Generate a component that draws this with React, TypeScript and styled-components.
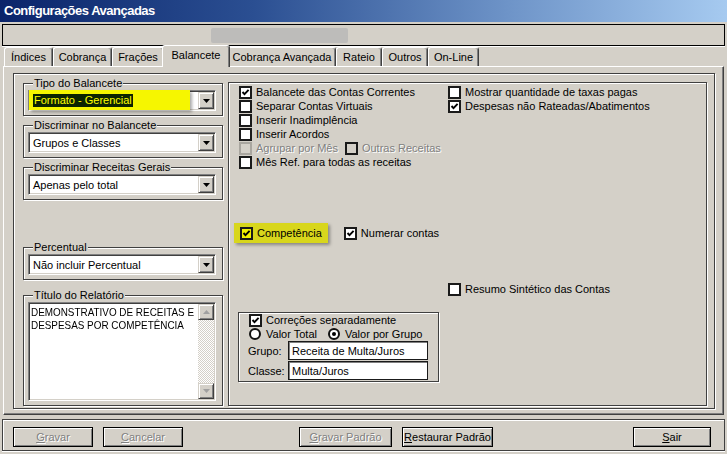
import React from "react";
import styled, { createGlobalStyle } from "styled-components";

const GlobalStyle = createGlobalStyle`
  html, body { margin: 0; padding: 0; background: #d4d0c8; }
  body { font-family: "Liberation Sans", Arial, sans-serif; font-size: 11px; color: #000; }
  *, *::before, *::after { box-sizing: border-box; }
`;

const Window = styled.div`
  width: 727px;
  height: 454px;
  display: flex;
  flex-direction: column;
  background: #d4d0c8;
  overflow: hidden;
`;

const TitleBar = styled.div`
  flex: none;
  height: 22px;
  display: flex;
  align-items: center;
  padding: 0 0 1px 4px;
  background: linear-gradient(90deg, #0a246a 0%, #2b4f92 35%, #6e94c8 70%, #a6caf0 100%);
  color: #fff;
  font-weight: bold;
  font-size: 13px;
  letter-spacing: -0.5px;
  white-space: nowrap;
`;

const Content = styled.div`
  flex: 1;
  display: flex;
  flex-direction: column;
  padding: 2px 2px 0 2px;
`;

const TopPanel = styled.div`
  flex: none;
  height: 22px;
  display: flex;
  align-items: center;
  padding-left: 208px;
  border: 1px solid #000;
  box-shadow: 0 1px 0 #fff;
`;

const ProgressSlot = styled.div`
  width: 137px;
  height: 15px;
  background: #bdbcba;
  border-radius: 2px;
`;

const TabStrip = styled.div`
  flex: none;
  height: 21px;
  margin-top: -1px;
  display: flex;
  align-items: flex-end;
  padding-left: 2px;
  position: relative;
  z-index: 1;
`;

const Tab = styled.div<{ $w: number; $active?: boolean }>`
  flex: none;
  width: ${(p) => p.$w}px;
  height: ${(p) => (p.$active ? 22 : 19)}px;
  margin: 0 ${(p) => (p.$active ? -2 : 0)}px ${(p) => (p.$active ? -1 : 0)}px;
  padding-bottom: ${(p) => (p.$active ? 3 : 0)}px;
  display: flex;
  align-items: center;
  justify-content: center;
  background: #d4d0c8;
  border-top: 1px solid #fff;
  border-left: 1px solid #fff;
  border-right: 1px solid #404040;
  box-shadow: inset -1px 0 0 #808080;
  border-radius: 3px 3px 0 0;
  position: relative;
  z-index: ${(p) => (p.$active ? 2 : 1)};
  white-space: nowrap;
`;

const TabPage = styled.div`
  flex: none;
  height: 349px;
  margin: 0 1px;
  display: flex;
  border: 1px solid;
  border-color: #fff #404040 #404040 #fff;
  box-shadow: inset -1px -1px 0 #808080;
  padding: 6px 8px 5px 9px;
`;

const Frame = styled.div`
  flex: 1;
  display: flex;
  gap: 5px;
  padding: 3px 7px 1px 9px;
  border: 1px solid #404040;
  box-shadow: inset 1px 1px 0 #fff, 1px 1px 0 #fff;
`;

const LeftCol = styled.div`
  flex: none;
  width: 200px;
  display: flex;
  flex-direction: column;
`;

const Group = styled.fieldset<{ $mt?: number }>`
  margin: ${(p) => p.$mt ?? 0}px 0 0;
  padding: 0 6px 4px 4px;
  min-width: 0;
  border: 1px solid #404040;
  box-shadow: inset 1px 1px 0 #fff, 1px 1px 0 #fff;
`;

const Legend = styled.legend`
  margin-left: 5px;
  padding: 0 1px;
  line-height: 13px;
  font-size: 11px;
  background: #d4d0c8;
`;

const SelectBox = styled.div`
  height: 21px;
  display: flex;
  background: #fff;
  border: 1px solid;
  border-color: #808080 #fff #fff #808080;
  padding: 1px;
  box-shadow: inset 1px 1px 0 #404040, inset -1px -1px 0 #d4d0c8;
`;

const SelectValue = styled.div<{ $hl?: boolean }>`
  flex: ${(p) => (p.$hl ? "none" : "1")};
  width: ${(p) => (p.$hl ? "161px" : "auto")};
  margin: ${(p) => (p.$hl ? "-2px 0 -1px -1px" : "0")};
  padding-left: ${(p) => (p.$hl ? 4 : 3)}px;
  display: flex;
  align-items: center;
  white-space: nowrap;
  background: ${(p) => (p.$hl ? "#f6f600" : "transparent")};
  box-shadow: ${(p) => (p.$hl ? "2px 2px 3px rgba(0,0,0,0.35)" : "none")};
  position: relative;
  z-index: 1;
`;

const Selection = styled.span`
  background: #0c2400;
  color: #ffff00;
  line-height: 13px;
  padding: 0 1px;
`;

const Spacer = styled.div`
  flex: 1;
`;

const DropButton = styled.div`
  flex: none;
  width: 16px;
  display: flex;
  align-items: center;
  justify-content: center;
  background: #d4d0c8;
  border: 1px solid;
  border-color: #d4d0c8 #404040 #404040 #d4d0c8;
  box-shadow: inset 1px 1px 0 #fff, inset -1px -1px 0 #808080;
`;

const Memo = styled.div`
  height: 99px;
  display: flex;
  background: #fff;
  border: 1px solid;
  border-color: #808080 #fff #fff #808080;
  padding: 1px;
  box-shadow: inset 1px 1px 0 #404040, inset -1px -1px 0 #d4d0c8;
`;

const MemoText = styled.div`
  flex: 1;
  min-width: 0;
  padding: 2px 0 0 1px;
  display: flex;
  flex-direction: column;
  align-items: flex-start;
`;

const MemoLine = styled.span`
  display: block;
  line-height: 13px;
  white-space: nowrap;
  transform: scaleX(0.9);
  transform-origin: 0 50%;
`;

const ScrollBar = styled.div`
  flex: none;
  width: 16px;
  display: flex;
  flex-direction: column;
  justify-content: space-between;
  background: repeating-conic-gradient(#ffffff 0 25%, #d4d0c8 0 50%) 0 0 / 2px 2px;
  position: relative;
  z-index: 1;
`;

const ScrollBtn = styled.div`
  height: 16px;
  display: flex;
  align-items: center;
  justify-content: center;
  background: #d4d0c8;
  border: 1px solid;
  border-color: #d4d0c8 #404040 #404040 #d4d0c8;
  box-shadow: inset 1px 1px 0 #fff, inset -1px -1px 0 #808080;
`;

const RightPanel = styled.div`
  flex: 1;
  margin: 5px 0 1px;
  display: flex;
  padding: 2px 0 0 10px;
  border: 1px solid #404040;
  box-shadow: inset 1px 1px 0 #fff, 1px 1px 0 #fff;
`;

const PanelCol = styled.div<{ $w?: number }>`
  flex: ${(p) => (p.$w ? "none" : "1")};
  width: ${(p) => (p.$w ? `${p.$w}px` : "auto")};
  display: flex;
  flex-direction: column;
  align-items: flex-start;
`;

const CheckRow = styled.div<{ $mt?: number; $ml?: number; $h?: number }>`
  display: flex;
  align-items: center;
  gap: 4px;
  height: ${(p) => p.$h ?? 14}px;
  margin-top: ${(p) => p.$mt ?? 0}px;
  margin-left: ${(p) => p.$ml ?? 0}px;
  white-space: nowrap;
`;

const InlineGroup = styled.div`
  display: flex;
  align-items: center;
`;

const Box = styled.span<{ $variant: "normal" | "faded" | "dim"; $hl?: boolean }>`
  flex: none;
  width: 13px;
  height: 13px;
  display: inline-flex;
  align-items: center;
  justify-content: center;
  border: 2px solid ${(p) => (p.$variant === "faded" ? "#a9a69f" : "#1a1a1a")};
  background: ${(p) => (p.$hl ? "#f0f000" : p.$variant === "normal" ? "#fff" : "#d4d0c8")};
`;

const Label = styled.span<{ $disabled?: boolean }>`
  line-height: 13px;
  color: ${(p) => (p.$disabled ? "#808080" : "#000")};
  text-shadow: ${(p) => (p.$disabled ? "1px 1px 0 #fff" : "none")};
`;

const Highlight = styled.div`
  display: flex;
  align-items: center;
  gap: 4px;
  height: 20px;
  margin-left: -5px;
  padding: 0 6px 0 6px;
  background: #d8d61c;
  box-shadow: 2px 2px 3px rgba(0, 0, 0, 0.35);
`;

const SubGroup = styled.div`
  width: 201px;
  margin: 69px 0 0 -1px;
  padding: 1px 9px 1px 9px;
  display: flex;
  flex-direction: column;
  border: 1px solid #404040;
  box-shadow: inset 1px 1px 0 #fff, 1px 1px 0 #fff;
`;

const RadioRow = styled.div`
  display: flex;
  align-items: center;
  gap: 11px;
  height: 13px;
  margin-left: 1px;
`;

const RadioItem = styled.div`
  display: flex;
  align-items: center;
  gap: 5px;
  white-space: nowrap;
`;

const RadioCircle = styled.span<{ $on?: boolean }>`
  flex: none;
  width: 12px;
  height: 12px;
  border-radius: 50%;
  border: 2px solid #111;
  background: #fff;
  display: inline-flex;
  align-items: center;
  justify-content: center;
  &::after {
    content: "";
    width: 4px;
    height: 4px;
    border-radius: 50%;
    background: ${(p) => (p.$on ? "#000" : "transparent")};
  }
`;

const FieldRow = styled.div<{ $mt: number }>`
  display: flex;
  align-items: center;
  height: 19px;
  margin-top: ${(p) => p.$mt}px;
`;

const FieldLabel = styled.span`
  width: 40px;
  flex: none;
`;

const TextInput = styled.div`
  width: 140px;
  height: 19px;
  display: flex;
  align-items: center;
  padding-left: 3px;
  background: #fff;
  border: 1px solid #1a1a1a;
  box-shadow: inset 1px 1px 0 #808080;
  white-space: nowrap;
`;

const ButtonBar = styled.div`
  flex: none;
  height: 32px;
  margin-top: 4px;
  display: flex;
  align-items: flex-start;
  gap: 10px;
  padding: 7px 13px 0 10px;
  border: 1px solid #404040;
  box-shadow: inset 1px 1px 0 #fff, 0 1px 0 #fff;
`;

const Button = styled.button<{ $w: number; $ml?: string }>`
  flex: none;
  width: ${(p) => p.$w}px;
  height: 20px;
  margin-left: ${(p) => p.$ml ?? "0"};
  padding: 0;
  font-family: inherit;
  font-size: 11px;
  color: #000;
  white-space: nowrap;
  background: #d4d0c8;
  border: 1px solid #000;
  box-shadow: inset 1px 1px 0 #fff, inset -1px -1px 0 #808080;
  &:disabled {
    color: #808080;
    text-shadow: 1px 1px 0 #fff;
  }
`;

const CheckMark = () => (
  <svg width="9" height="9" viewBox="0 0 9 9">
    <path d="M1.5 4 L3.5 6.2 L7.6 1.8" fill="none" stroke="#000" strokeWidth="1.9" />
  </svg>
);

const Arrow = ({ up, color = "#000" }: { up?: boolean; color?: string }) => (
  <svg width="7" height="4" viewBox="0 0 7 4">
    <polygon points={up ? "0,4 7,4 3.5,0" : "0,0 7,0 3.5,4"} fill={color} />
  </svg>
);

type CB = {
  label: string;
  checked?: boolean;
  variant?: "normal" | "faded" | "dim";
  disabled?: boolean;
};

const Check = ({ label, checked, variant = "normal", disabled }: CB) => (
  <>
    <Box $variant={variant}>{checked && <CheckMark />}</Box>
    <Label $disabled={disabled}>{label}</Label>
  </>
);

const Select = ({ value, hl }: { value: string; hl?: boolean }) => (
  <SelectBox>
    <SelectValue $hl={hl}>{hl ? <Selection>{value}</Selection> : value}</SelectValue>
    {hl && <Spacer />}
    <DropButton>
      <Arrow />
    </DropButton>
  </SelectBox>
);

const tabs = [
  { t: "Índices", w: 49 },
  { t: "Cobrança", w: 59 },
  { t: "Frações", w: 52 },
  { t: "Balancete", w: 68, active: true },
  { t: "Cobrança Avançada", w: 108 },
  { t: "Rateio", w: 46 },
  { t: "Outros", w: 46 },
  { t: "On-Line", w: 51 },
];

const leftChecks: CB[] = [
  { label: "Balancete das Contas Correntes", checked: true },
  { label: "Separar Contas Virtuais" },
  { label: "Inserir Inadimplência" },
  { label: "Inserir Acordos" },
];

const memoLines = ["DEMONSTRATIVO DE RECEITAS E", "DESPESAS POR COMPETÊNCIA"];

export default function App() {
  return (
    <Window>
      <GlobalStyle />
      <TitleBar>Configurações Avançadas</TitleBar>
      <Content>
        <TopPanel>
          <ProgressSlot />
        </TopPanel>
        <TabStrip>
          {tabs.map((t) => (
            <Tab key={t.t} $w={t.w} $active={t.active}>
              {t.t}
            </Tab>
          ))}
        </TabStrip>
        <TabPage>
          <Frame>
            <LeftCol>
              <Group>
                <Legend>Tipo do Balancete</Legend>
                <Select value="Formato - Gerencial" hl />
              </Group>
              <Group $mt={3}>
                <Legend>Discriminar no Balancete</Legend>
                <Select value="Grupos e Classes" />
              </Group>
              <Group $mt={3}>
                <Legend>Discriminar Receitas Gerais</Legend>
                <Select value="Apenas pelo total" />
              </Group>
              <Group $mt={41}>
                <Legend>Percentual</Legend>
                <Select value="Não incluir Percentual" />
              </Group>
              <Group $mt={9}>
                <Legend>Título do Relatório</Legend>
                <Memo>
                  <MemoText>
                    {memoLines.map((l) => (
                      <MemoLine key={l}>{l}</MemoLine>
                    ))}
                  </MemoText>
                  <ScrollBar>
                    <ScrollBtn>
                      <Arrow up color="#a0a0a0" />
                    </ScrollBtn>
                    <ScrollBtn>
                      <Arrow color="#a0a0a0" />
                    </ScrollBtn>
                  </ScrollBar>
                </Memo>
              </Group>
            </LeftCol>
            <RightPanel>
              <PanelCol $w={209}>
                {leftChecks.map((c) => (
                  <CheckRow key={c.label}>
                    <Check {...c} />
                  </CheckRow>
                ))}
                <CheckRow>
                  <Check label="Agrupar por Mês" variant="faded" disabled />
                  <InlineGroup>
                    <CheckRow $ml={3}>
                      <Check label="Outras Receitas" variant="dim" disabled />
                    </CheckRow>
                  </InlineGroup>
                </CheckRow>
                <CheckRow>
                  <Check label="Mês Ref. para todas as receitas" />
                </CheckRow>
                <CheckRow $mt={54} $h={20}>
                  <Highlight>
                    <Box $variant="normal" $hl>
                      <CheckMark />
                    </Box>
                    <Label>Competência</Label>
                  </Highlight>
                  <CheckRow $ml={12}>
                    <Check label="Numerar contas" checked />
                  </CheckRow>
                </CheckRow>
                <SubGroup>
                  <CheckRow $h={13} $ml={1}>
                    <Check label="Correções separadamente" checked />
                  </CheckRow>
                  <RadioRow>
                    <RadioItem>
                      <RadioCircle />
                      <span>Valor Total</span>
                    </RadioItem>
                    <RadioItem>
                      <RadioCircle $on />
                      <span>Valor por Grupo</span>
                    </RadioItem>
                  </RadioRow>
                  <FieldRow $mt={1}>
                    <FieldLabel>Grupo:</FieldLabel>
                    <TextInput>Receita de Multa/Juros</TextInput>
                  </FieldRow>
                  <FieldRow $mt={1}>
                    <FieldLabel>Classe:</FieldLabel>
                    <TextInput>Multa/Juros</TextInput>
                  </FieldRow>
                </SubGroup>
              </PanelCol>
              <PanelCol>
                <CheckRow>
                  <Check label="Mostrar quantidade de taxas pagas" />
                </CheckRow>
                <CheckRow>
                  <Check label="Despesas não Rateadas/Abatimentos" checked />
                </CheckRow>
                <CheckRow $mt={169}>
                  <Check label="Resumo Sintético das Contas" />
                </CheckRow>
              </PanelCol>
            </RightPanel>
          </Frame>
        </TabPage>
        <ButtonBar>
          <Button $w={80} disabled>
            <u>G</u>ravar
          </Button>
          <Button $w={80} disabled>
            <u>C</u>ancelar
          </Button>
          <Button $w={93} $ml="106px" disabled>
            <u>G</u>ravar Padrão
          </Button>
          <Button $w={91}>
            <u>R</u>estaurar Padrão
          </Button>
          <Button $w={78} $ml="auto">
            <u>S</u>air
          </Button>
        </ButtonBar>
      </Content>
    </Window>
  );
}
